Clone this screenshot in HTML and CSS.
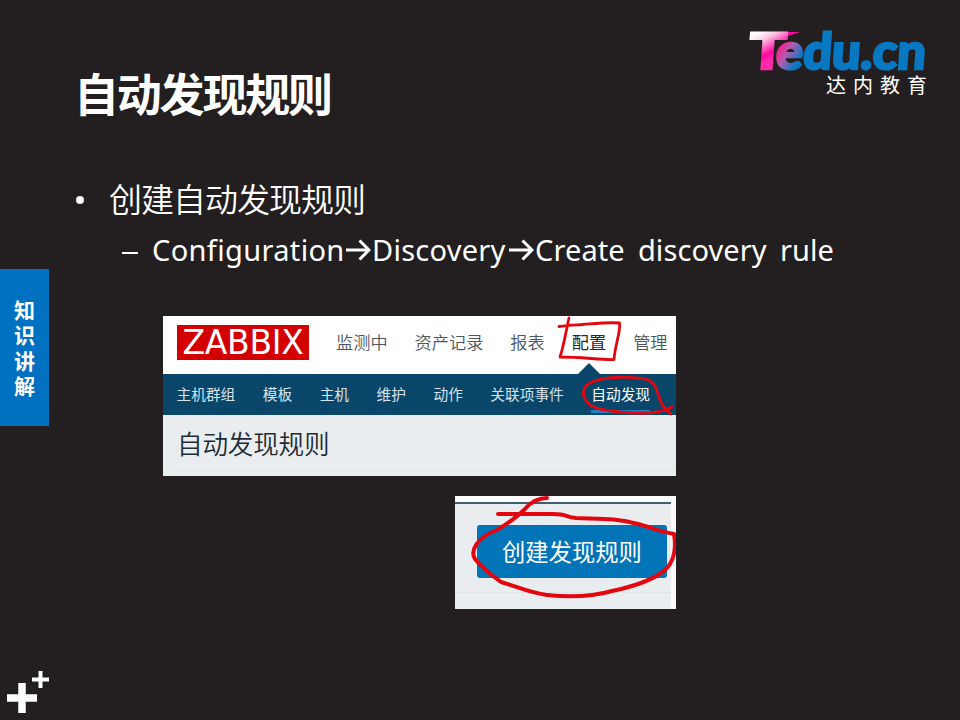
FILE: index.html
```
<!DOCTYPE html>
<html lang="zh-CN">
<head>
<meta charset="utf-8">
<title>自动发现规则</title>
<link rel="stylesheet" href="styles.css">
</head>
<body>
<div class="slide">
  <aside class="rail">
    <div class="tag">知<br>识<br>讲<br>解</div>
    <svg class="plus" width="49" height="49" viewBox="0 0 49 49">
      <path d="M7 27H37M22 12V42" stroke="#fff" stroke-width="7.500"/>
      <path d="M32 8.500H49M40.500 0V17" stroke="#fff" stroke-width="4"/>
    </svg>
  </aside>
  <main class="content">
    <header class="head">
      <h1>自动发现规则</h1>
      <div class="brand">
        <svg width="180" height="44" viewBox="748 28 180 44">
          <defs>
            <linearGradient id="swoosh" gradientUnits="userSpaceOnUse" x1="760" y1="30" x2="784" y2="41">
              <stop offset="0" stop-color="#fff"/><stop offset=".5" stop-color="#fb9fd2"/><stop offset="1" stop-color="#ff079f"/>
            </linearGradient>
            <linearGradient id="pink" gradientUnits="userSpaceOnUse" x1="10" y1="-38" x2="25" y2="-12">
              <stop offset="0" stop-color="#fff"/><stop offset=".3" stop-color="#fbc9e6"/><stop offset=".8" stop-color="#ff079f"/><stop offset="1" stop-color="#ff2aa8"/>
            </linearGradient>
            <linearGradient id="mix" gradientUnits="userSpaceOnUse" x1="3" y1="-22" x2="24" y2="-10">
              <stop offset="0" stop-color="#f5208e"/><stop offset=".4" stop-color="#b45cae"/><stop offset="1" stop-color="#0878c2"/>
            </linearGradient>
          </defs>
          <path d="M762 32H800L785 37L774 40.500H762Z" fill="url(#swoosh)"/>
          <text class="logo logo-t" transform="translate(748 69) skewX(-4)" textLength="37" lengthAdjust="spacingAndGlyphs">T</text>
          <text class="logo" transform="translate(775 69) skewX(-4)" textLength="150" lengthAdjust="spacingAndGlyphs"><tspan class="logo-e">e</tspan><tspan>du.cn</tspan></text>
        </svg>
        <div class="brand-sub">达内教育</div>
      </div>
    </header>
    <ul class="points">
      <li class="p1"><i class="dot"></i><span>创建自动发现规则</span></li>
      <li class="p2"><i class="dash"></i><span class="w1">Configuration</span><svg class="arrow" width="25" height="24" viewBox="0 0 25 24"><path d="M0 12H23M13.500 2.500L23 12L13.500 21.500"/></svg><span class="w2">Discovery</span><svg class="arrow" width="25" height="24" viewBox="0 0 25 24"><path d="M0 12H23M13.500 2.500L23 12L13.500 21.500"/></svg><span class="w3">Create discovery rule</span></li>
    </ul>
    <section class="shot nav-shot">
      <div class="top">
        <b class="zbx"><span>ZABBIX</span></b>
        <span class="t1">监测中</span><span class="t2">资产记录</span><span class="t3">报表</span><span class="t4">配置</span><span class="t5">管理</span>
      </div>
      <div class="sub">
        <span>主机群组</span><span>模板</span><span>主机</span><span>维护</span><span>动作</span><span>关联项事件</span><span class="on">自动发现</span>
      </div>
      <div class="page">自动发现规则</div>
      <svg class="ink" width="513" height="160" viewBox="163 316 513 160">
        <path d="M578 374L589 363L600 374Z" fill="#0a466a"/>
        <path class="pen" d="M559 326.500C568 325 575 325 583 324.500S607 322 619.500 323C621 331 615 345 614 359.500C600 360 583 357 560 357C564 345 566 331 569 318"/>
        <path class="pen" d="M672 407C660 414 640 414 620 412C604 410 594 409 588 403C580 394 583 386 592 382C606 376 632 376 649 380C656 384 657 391 659 397C661 404 665 410 671 414"/>
      </svg>
    </section>
    <section class="shot btn-shot">
      <div class="panel"><div class="btn">创建发现规则</div></div>
      <svg class="ink" width="221" height="113" viewBox="455 496 221 113">
        <path class="pen thick" d="M547 498C537 498 530 503 525 509C515 519 505 525 497 530C476 538 470 551 475 559C482 568 490 574 501 582C518 587 530 593 547 595C565 597 591 597 612 591C636 586 651 580 661 573C672 566 677 553 674 534C661 532 650 527 638 524C616 518 599 519 576 518C565 517 568 514 553 514H498"/>
      </svg>
    </section>
  </main>
</div>
</body>
</html>
```
FILE: styles.css
```
* { box-sizing: border-box; }
body {
  margin: 0;
  background: #231f20;
  color: #fff;
  font-family: "Noto Sans CJK SC", sans-serif;
}
.slide {
  display: grid;
  grid-template-columns: 49px 1fr;
  width: 960px;
  height: 720px;
  overflow: hidden;
}
.rail {
  display: flex;
  flex-direction: column;
  justify-content: space-between;
  padding-top: 269px;
}
.tag {
  height: 157px;
  padding-top: 28px;
  background: #0070c0;
  font-size: 21px;
  font-weight: 700;
  line-height: 25.4px;
  text-align: center;
}
.plus { display: block; }
.content { display: flex; flex-direction: column; }
.head {
  display: flex;
  justify-content: space-between;
  height: 180px;
  padding: 28px 32px 0 25px;
}
h1 {
  margin: 35px 0 0;
  font-size: 45px;
  line-height: 60px;
  font-weight: 700;
  letter-spacing: -2.2px;
}
.brand { width: 180px; }
.brand svg { display: block; overflow: visible; }
.logo {
  font-family: Lato, sans-serif;
  font-weight: 900;
  font-size: 50px;
  fill: #0878c2;
  stroke: #0878c2;
  stroke-width: 2.4;
}
.logo-t { fill: url(#pink); stroke: url(#pink); }
.logo-e { fill: url(#mix); stroke: url(#mix); }
.brand-sub {
  margin-left: 78px;
  font-size: 20px;
  line-height: 26px;
  letter-spacing: 7px;
  white-space: nowrap;
}
.points { list-style: none; margin: 0; padding: 0; height: 136px; }
.p1, .p2 { display: flex; align-items: center; white-space: nowrap; }
.p1 { height: 40px; padding-left: 27px; font-size: 33px; letter-spacing: -1px; line-height: 40px; }
.p1 span { margin-top: -5px; font-weight: 350; }
.dot { width: 8px; height: 8px; margin-right: 25px; border-radius: 50%; background: #fff; }
.p2 { height: 40px; margin-top: 10px; padding-left: 73px; font: 29px/40px "Noto Sans", sans-serif; }
.dash { width: 16px; height: 2px; margin: 6px 14px 0 0; background: #fff; }
.w1 { width: 194px; letter-spacing: 0.35px; }
.w2 { width: 138px; padding-left: 1px; letter-spacing: 0.25px; }
.w3 { padding-left: 1px; letter-spacing: 0.1px; word-spacing: 5.5px; }
.arrow { flex: none; fill: none; stroke: #fff; stroke-width: 3; }
.shot { position: relative; overflow: hidden; }
.nav-shot { width: 513px; height: 160px; margin-left: 114px; background: #e9edf0; }
.top {
  display: flex;
  align-items: center;
  height: 58px;
  padding: 0 8px 5px 14px;
  background: #fff;
  color: #4c575f;
  font-size: 17.2px;
  line-height: 26px;
  font-weight: 350;
  white-space: nowrap;
}
.top > span { margin-top: -1px; }
.zbx {
  display: flex;
  align-items: center;
  justify-content: center;
  width: 132px;
  height: 35px;
  background: #d20000;
  color: #fff;
  font: 33px/35px "DejaVu Sans", sans-serif;
}
.zbx span { letter-spacing: -0.3px; }
.top .t1, .top .t2, .top .t3, .top .t4, .top .t5 { margin-left: 27px; }
.top .t4 { color: #1f2c33; font-weight: 400; }
.sub {
  display: flex;
  gap: 27.5px;
  height: 41px;
  padding-left: 13.5px;
  background: #0a466a;
  color: #d5e4ee;
  font-size: 14.7px;
  line-height: 39px;
  white-space: nowrap;
}
.sub .on { height: 39px; border-bottom: 3px solid #1f7fc4; color: #fff; }
.page {
  height: 56px;
  margin-left: 14px;
  border-bottom: 1px solid #dfe4e7;
  color: #1f2c33;
  font-size: 25.6px;
  letter-spacing: -0.2px;
  font-weight: 350;
  line-height: 55px;
}
.ink { position: absolute; left: 0; top: 0; }
.pen { fill: none; stroke: #e3060f; stroke-width: 2.8; stroke-linecap: round; stroke-linejoin: round; }
.thick { stroke-width: 4; }
.btn-shot {
  width: 221px;
  height: 113px;
  margin: 20px 0 0 406px;
  padding: 6px 5px 0 0;
  background: #fafafb;
}
.panel {
  height: 107px;
  padding: 21px 0 0 22px;
  border-top: 2px solid #405f70;
  background: linear-gradient(#e9edf0 88px, #dfe4e7 88px 89px, #e9edf0 89px);
}
.btn {
  width: 190px;
  height: 53px;
  border-radius: 3px;
  background: #0275b8;
  color: #fff;
  font-size: 23.3px;
  line-height: 52px;
  padding-left: 25px;
}
```
